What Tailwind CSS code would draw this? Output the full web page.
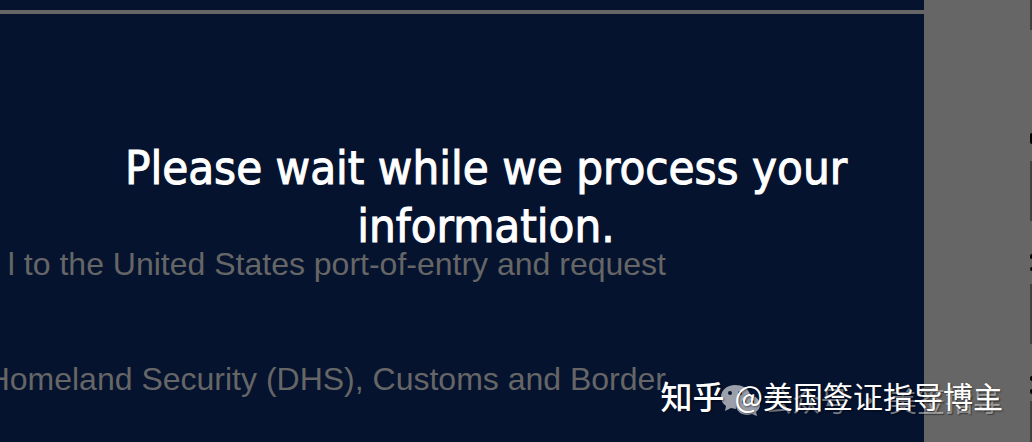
<!DOCTYPE html>
<html lang="en">
<head>
<meta charset="utf-8">
<title>Processing</title>
<script src="https://cdn.jsdelivr.net/npm/@tailwindcss/browser@4"></script>
</head>
<body class="relative flex min-h-screen overflow-hidden bg-[#666666] font-['Liberation_Sans',sans-serif]">
<main class="relative min-w-0 flex-1 overflow-hidden bg-[#05132f] pt-[10px]">
  <hr class="h-1 border-0 bg-[#666666]">
  <div class="flex flex-col items-end pt-[231px] pr-[258px] text-[32px] leading-[38px] whitespace-nowrap text-[#666666]">
    <p>l to the United States port-of-entry and request</p>
    <p class="pt-[77px]">Homeland Security (DHS), Customs and Border</p>
  </div>
  <div role="status" class="absolute inset-x-0 top-[139px] pr-[108px] pl-[156px] text-center font-['DejaVu_Sans_Condensed','DejaVu_Sans',sans-serif] text-[47px] leading-[58px] text-white [-webkit-text-stroke:1px_white]">
    <p class="-mx-10">Please wait while we process your<br>information.</p>
  </div>
</main>
<aside class="flex w-[108px] shrink-0 justify-end overflow-hidden">
  <div class="flex w-[2px] flex-col overflow-hidden">
    <div class="h-[30px] shrink-0 bg-[#414141]"></div>
    <div class="mt-[103px] h-[11px] shrink-0 rounded-l bg-black"></div>
    <div class="mt-[17px] h-[60px] shrink-0 bg-[#414141]"></div>
    <div class="mt-[33px] h-[5px] shrink-0 rounded-l bg-black"></div>
    <div class="mt-[8px] h-[4px] shrink-0 rounded-l bg-black"></div>
    <div class="mt-[13px] h-[60px] shrink-0 bg-[#414141]"></div>
    <div class="mt-[32px] h-[5px] shrink-0 rounded-l bg-black"></div>
    <div class="mt-[8px] h-[5px] shrink-0 rounded-l bg-black"></div>
    <div class="mt-[7px] flex-1 bg-[#414141]"></div>
  </div>
</aside>
<div lang="zh" class="absolute right-[31px] bottom-[22px] flex items-center font-['Noto_Sans_CJK_SC',sans-serif] text-[28px] leading-[40px] whitespace-nowrap text-white/45 text-shadow-[1px_1px_1px_rgb(0_0_0/0.4)]">
  <svg class="mr-[4px] h-[32px] w-[40px]" viewBox="0 0 40 32" aria-hidden="true">
    <g fill="#b5b9c0" fill-opacity=".85" fill-rule="evenodd">
      <path d="M15 1C7 1 1 6 1 13c0 4 2 7 5 9l-1 5 6-3 5 1c-1-9 5-14 14-15C28 4 22 1 15 1ZM10 7a2 2 0 1 1 0 4 2 2 0 0 1 0-4Zm10 0a2 2 0 1 1 0 4 2 2 0 0 1 0-4Z"/>
      <path d="M28 11c-7 0-12 4-12 10s5 10 12 10l4-1 5 2-1-4c2-2 4-4 4-7 0-6-5-10-12-10Zm-4 5a2 2 0 1 1 0 4 2 2 0 0 1 0-4Zm8 0a2 2 0 1 1 0 4 2 2 0 0 1 0-4Z"/>
    </g>
  </svg>
  <span>公众号 · 美签指导</span>
</div>
<div lang="zh" class="absolute right-[29px] bottom-[27px] flex items-center gap-[10px] font-['Noto_Sans_CJK_SC',sans-serif] text-[30px] leading-[40px] whitespace-nowrap text-white text-shadow-[1px_1px_2px_rgb(0_0_0/0.5)]">
  <span class="text-[32px] font-medium">知乎</span>
  <span>@美国签证指导博主</span>
</div>
</body>
</html>
